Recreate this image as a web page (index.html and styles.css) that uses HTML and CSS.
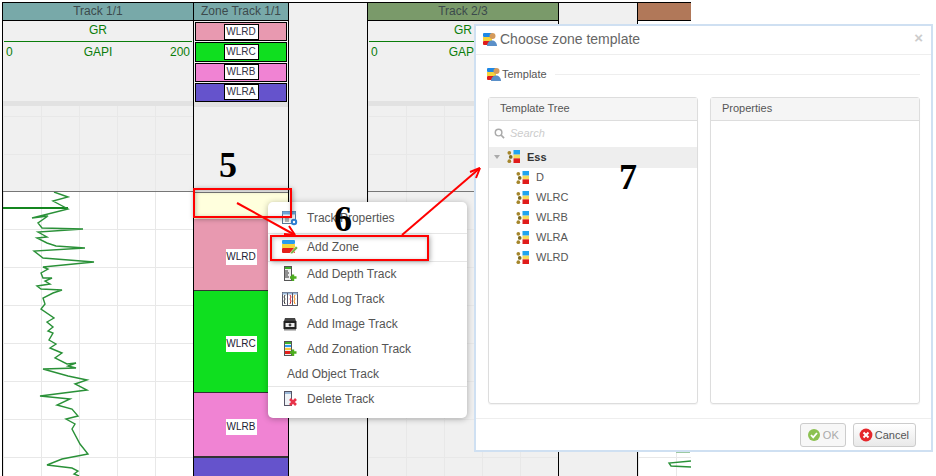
FILE: index.html
```html
<!DOCTYPE html>
<html lang="en">
<head>
  <meta charset="UTF-8" />
  <title>Choose zone template</title>
  <link rel="stylesheet" href="styles.css">
</head>
<body>
  <svg class="defs" width="0" height="0">
    <symbol id="icoPerson" viewBox="0 0 14 13">
      <rect x="0" y="0" width="9" height="4" rx="1" fill="#1e88e5"/>
      <rect x="0" y="4" width="9" height="4" fill="#f5d33b"/>
      <rect x="0" y="8" width="9" height="4" rx="1" fill="#e01b1b"/>
      <circle cx="9.5" cy="3" r="3" fill="#d49a5c"/>
      <path d="M4 13 C4 5.5 14 5.5 14 13 Z" fill="#5a8fc8"/>
    </symbol>
    <symbol id="icoTree" viewBox="0 0 14 14">
      <rect x="7" y="0" width="7" height="5" fill="#20a4ee"/>
      <rect x="7" y="5" width="7" height="4" fill="#f5dc5a"/>
      <rect x="7" y="9" width="7" height="5" fill="#e01b1b"/>
      <circle cx="2.5" cy="3" r="2" fill="#a5862b"/>
      <circle cx="4" cy="7.5" r="2" fill="#7d6a1e"/>
      <circle cx="2.5" cy="12" r="2" fill="#a5862b"/>
    </symbol>
  </svg>

  <!-- tracks -->
  <div class="tracks">
    <div class="track track-log">
      <div class="track-head head-teal">Track 1/1</div>
      <div class="legend">
        <div class="legend-name">GR</div>
        <div class="legend-scale"><span>0</span><span class="scale-unit">GAPI</span><span class="scale-max">200</span></div>
      </div>
      <div class="track-sep"></div>
      <div class="upper upper-grid"></div>
      <div class="lower lower-grid">
        <svg class="curve" viewBox="3 192 190 284" width="190" height="284">
          <path d="M3 208H68" stroke="#14861f" stroke-width="2" fill="none"/>
          <polyline fill="none" stroke="#2a9138" stroke-width="1.4" points="54,192 68,197 53,201 68,209 32,218 48,216 38,223 42,228 83,229 38,232 47,237 37,238 47,243 56,246 85,248 34,251 43,258 94,262 43,267 48,269 41,273 43,278 52,278 45,281 50,284 37,286 41,289 62,290 53,293 43,298 45,304 41,309 54,318 47,322 53,327 48,331 53,333 49,340 56,344 50,348 62,353 55,358 67,364 76,363 68,366 76,368 43,369 68,376 87,380 75,384 87,390 40,396 70,399 57,405 72,409 78,416 66,419 75,424 72,429 80,444 88,454 62,459 47,465 72,468 78,471 74,474 79,476"/>
        </svg>
      </div>
    </div>

    <div class="track track-zone">
      <div class="track-head head-teal">Zone Track 1/1</div>
      <div class="legend zone-legend">
        <div class="zone-key key-pink"><span>WLRD</span></div>
        <div class="zone-key key-green"><span>WLRC</span></div>
        <div class="zone-key key-pink2"><span>WLRB</span></div>
        <div class="zone-key key-purple"><span>WLRA</span></div>
      </div>
      <div class="track-sep"></div>
      <div class="upper"></div>
      <div class="lower zones">
        <div class="zone zone-new"></div>
        <div class="zone zone-d"><span>WLRD</span></div>
        <div class="zone zone-c"><span>WLRC</span></div>
        <div class="zone zone-b"><span>WLRB</span></div>
        <div class="zone zone-a"></div>
      </div>
    </div>

    <div class="track track-gap"></div>

    <div class="track track-log">
      <div class="track-head head-green">Track 2/3</div>
      <div class="legend">
        <div class="legend-name">GR</div>
        <div class="legend-scale"><span>0</span><span class="scale-unit">GAPI</span><span class="scale-max">200</span></div>
      </div>
      <div class="track-sep"></div>
      <div class="upper upper-grid"></div>
      <div class="lower lower-grid lower-grey"></div>
    </div>

    <div class="track track-gap"></div>

    <div class="track track-last">
      <div class="track-head head-brown"></div>
      <div class="legend legend-white"></div>
      <div class="track-sep"></div>
      <div class="upper upper-white"></div>
      <div class="lower lower-grid">
        <svg class="curve" viewBox="638 192 53 284" width="53" height="284">
          <path d="M676 452.5H690" stroke="#9cc9a2" stroke-width="1" fill="none"/>
          <polyline fill="none" stroke="#2a9138" stroke-width="1.4" points="691,461 669,463 671,466 691,467"/>
        </svg>
      </div>
    </div>
  </div>

  <!-- context menu -->
  <div class="menu">
    <div class="menu-item item-first">
      <svg class="menu-ico" viewBox="0 0 16 16"><rect x="0.5" y="1.5" width="13" height="12" fill="#fff" stroke="#5c7a99"/><rect x="0.5" y="1.5" width="13" height="3" fill="#6fa8dc"/><path d="M3 7h4M3 9h4M3 11h4" stroke="#777"/><circle cx="12" cy="12" r="3.2" fill="#2d7fd3"/><circle cx="12" cy="12" r="1.2" fill="#fff"/></svg>
      <span>Track Properties</span>
    </div>
    <div class="menu-item item-zone">
      <svg class="menu-ico" viewBox="0 0 16 16"><rect x="0" y="1" width="13" height="4" rx="1" fill="#2a9df0"/><rect x="0" y="5" width="13" height="4" fill="#f7d53c"/><rect x="0" y="9" width="13" height="5" rx="1" fill="#e3201b"/><path d="M8 14 L14 7 L16 9 L10 15 Z" fill="#7cb342" stroke="#fff" stroke-width="0.5"/></svg>
      <span>Add Zone</span>
    </div>
    <div class="menu-item">
      <svg class="menu-ico" viewBox="0 0 16 16"><rect x="2.5" y="0.5" width="7" height="14" fill="#eee" stroke="#555"/><rect x="3" y="1" width="6" height="2" fill="#3fae2a"/><path d="M3 5h3M3 7h4M3 9h3M3 11h4" stroke="#333"/><path d="M11 8.5v6.5M8 11.5h6.5" stroke="#4cae1e" stroke-width="2.4"/></svg>
      <span>Add Depth Track</span>
    </div>
    <div class="menu-item">
      <svg class="menu-ico" viewBox="0 0 16 16"><rect x="0.5" y="1.5" width="15" height="13" fill="#fff" stroke="#556"/><rect x="0.5" y="1.5" width="15" height="2" fill="#9ab8d8"/><path d="M5.5 2v12M10.5 2v12" stroke="#556"/><path d="M3 4l-1 2 1 2-1 2 1 3" stroke="#333" fill="none"/><path d="M8 4l1 2-1 2 1 2-1 3" stroke="#d3202a" fill="none"/><path d="M13 4l-1 2 1 2-1 2 1 3" stroke="#ef8a17" fill="none"/></svg>
      <span>Add Log Track</span>
    </div>
    <div class="menu-item">
      <svg class="menu-ico" viewBox="0 0 16 16"><path d="M3 2h10l1 3H2z" fill="#444"/><rect x="1.5" y="5" width="13" height="8" fill="#222"/><rect x="3.5" y="7" width="9" height="4" fill="#eee"/><circle cx="8" cy="9" r="1.4" fill="#444"/><rect x="2" y="13" width="12" height="1.5" fill="#888"/></svg>
      <span>Add Image Track</span>
    </div>
    <div class="menu-item">
      <svg class="menu-ico" viewBox="0 0 16 16"><rect x="2.5" y="0.5" width="7" height="14" fill="#eee" stroke="#555"/><rect x="3" y="1" width="6" height="2" fill="#3fae2a"/><rect x="3" y="4" width="6" height="2" fill="#2a9df0"/><rect x="3" y="7" width="6" height="2" fill="#f7c93c"/><rect x="3" y="10" width="6" height="3" fill="#e3201b"/><path d="M11 8.5v6.5M8 11.5h6.5" stroke="#4cae1e" stroke-width="2.4"/></svg>
      <span>Add Zonation Track</span>
    </div>
    <div class="menu-item item-noicon"><span>Add Object Track</span></div>
    <div class="menu-item item-delete">
      <svg class="menu-ico" viewBox="0 0 16 16"><rect x="2.5" y="0.5" width="7" height="14" fill="#eef2f6" stroke="#556"/><rect x="3" y="1" width="6" height="2" fill="#9ab8d8"/><path d="M8 8l6 6M14 8l-6 6" stroke="#e8344a" stroke-width="2.6"/></svg>
      <span>Delete Track</span>
    </div>
  </div>

  <!-- dialog -->
  <div class="dialog">
    <div class="dialog-head">
      <svg class="dialog-ico"><use href="#icoPerson"/></svg>
      <span class="dialog-title">Choose zone template</span>
      <span class="dialog-close">×</span>
    </div>
    <div class="dialog-body">
      <div class="section">
        <svg class="dialog-ico"><use href="#icoPerson"/></svg>
        <span>Template</span>
        <div class="section-line"></div>
      </div>
      <div class="panels">
        <div class="panel">
          <div class="panel-head">Template Tree</div>
          <div class="search">
            <svg class="search-ico" viewBox="0 0 12 12"><circle cx="5" cy="5" r="3.6" fill="none" stroke="#aaa" stroke-width="1.6"/><path d="M7.8 7.8L11 11" stroke="#aaa" stroke-width="1.8"/></svg>
            <span>Search</span>
          </div>
          <div class="tree-root">
            <span class="caret"></span>
            <svg class="tree-ico"><use href="#icoTree"/></svg>
            <span>Ess</span>
          </div>
          <div class="tree-row"><svg class="tree-ico"><use href="#icoTree"/></svg><span>D</span></div>
          <div class="tree-row"><svg class="tree-ico"><use href="#icoTree"/></svg><span>WLRC</span></div>
          <div class="tree-row"><svg class="tree-ico"><use href="#icoTree"/></svg><span>WLRB</span></div>
          <div class="tree-row"><svg class="tree-ico"><use href="#icoTree"/></svg><span>WLRA</span></div>
          <div class="tree-row"><svg class="tree-ico"><use href="#icoTree"/></svg><span>WLRD</span></div>
        </div>
        <div class="panel">
          <div class="panel-head">Properties</div>
        </div>
      </div>
    </div>
    <div class="dialog-foot">
      <button class="btn btn-off">
        <svg class="btn-ico" viewBox="0 0 14 14"><circle cx="7" cy="7" r="6" fill="#8cc152"/><path d="M4 7l2.2 2.4L10 5" stroke="#fff" stroke-width="1.8" fill="none"/></svg>
        OK
      </button>
      <button class="btn">
        <svg class="btn-ico" viewBox="0 0 14 14"><circle cx="7" cy="7" r="6.4" fill="#e5262b"/><path d="M4.5 4.5l5 5M9.5 4.5l-5 5" stroke="#fff" stroke-width="2"/></svg>
        Cancel
      </button>
    </div>
  </div>

  <!-- annotations -->
  <div class="red-box box-zone"></div>
  <div class="red-box box-menu"></div>
  <svg class="arrows" width="936" height="476">
    <path d="M237 203L295 235" stroke="#f00" stroke-width="2" fill="none"/>
    <path d="M295 235L284 234M295 235L289 226" stroke="#f00" stroke-width="2" fill="none"/>
    <path d="M402 235L480 168" stroke="#f00" stroke-width="2" fill="none"/>
    <path d="M480 168L470 172M480 168L476 178" stroke="#f00" stroke-width="2" fill="none"/>
  </svg>
  <span class="step step-5">5</span>
  <span class="step step-6">6</span>
  <span class="step step-7">7</span>
</body>
</html>
```

FILE: styles.css
```css
body {
  position: relative;
  width: 936px;
  height: 476px;
  margin: 0;
  overflow: hidden;
  background: #fff;
  font-family: "Liberation Sans", Arial, sans-serif;
  font-size: 12px;
  color: #555;
}

.defs {
  position: absolute;
}

/* tracks */
.tracks {
  display: flex;
  height: 474px;
  padding: 2px 0 0 2px;
}

.track {
  display: flex;
  flex-direction: column;
  border-left: 1px solid #000;
  border-top: 1px solid #000;
}

.track-log {
  width: 190px;
}

.track-zone {
  width: 94px;
}

.track-gap {
  width: 78px;
  background: #f0f0f0;
}

.track-last {
  width: 53px;
}

.track-head {
  flex: none;
  height: 17px;
  border-bottom: 1px solid #000;
  line-height: 17px;
  text-align: center;
  color: #3c4a4c;
}

.head-teal {
  background: #78a9a9;
}

.head-green {
  background: #7a9a6a;
}

.head-brown {
  background: #b17859;
}

.legend {
  flex: none;
  height: 80px;
  background: #f0f0f0;
  color: #0a7d0a;
}

.legend-white {
  background: #fff;
}

.legend-name {
  height: 20px;
  border-bottom: 1px solid #0a7d0a;
  margin: 0 1px;
  line-height: 18px;
  text-align: center;
}

.legend-scale {
  display: grid;
  grid-template-columns: 1fr auto 1fr;
  padding: 3px 3px 0 3px;
}

.scale-max {
  text-align: right;
}

.track-sep {
  flex: none;
  height: 5px;
  background: #e2e2e2;
}

.upper {
  flex: none;
  height: 85px;
  border-bottom: 1px solid #777;
  background-color: #f0f0f0;
}

.upper-white {
  background-color: #fff;
}

.upper-grid,
.lower-grid {
  background-image:
    linear-gradient(#e8e8e8 1px, transparent 1px),
    linear-gradient(90deg, #e8e8e8 1px, transparent 1px);
  background-size: 38px 38px;
}

.upper-grid {
  background-position: 0 10px, 38px 0;
}

.lower {
  flex: 1;
  overflow: hidden;
}

.lower-grid {
  background-position: 0 37px, 38px 0;
}

.lower-grey {
  background-color: #f0f0f0;
}

.curve {
  display: block;
}

/* zone track */
.zone-legend {
  display: flex;
  flex-direction: column;
  gap: 1px;
  padding: 1px 1px 0 1px;
}

.zone-key {
  display: flex;
  align-items: center;
  justify-content: center;
  height: 18px;
  border: 1px solid #000;
}

.zone-key span {
  width: 33px;
  height: 14px;
  border: 1px solid #000;
  background: #fff;
  font-size: 10px;
  line-height: 14px;
  text-align: center;
  color: #334;
}

.key-pink,
.zone-d {
  background: #e899b0;
}

.key-green,
.zone-c {
  background: #0fdf1f;
}

.key-pink2,
.zone-b {
  background: #f083d3;
}

.key-purple,
.zone-a {
  background: #6553cc;
}

.zones {
  display: flex;
  flex-direction: column;
}

.zone {
  display: flex;
  flex: none;
  align-items: center;
  justify-content: center;
  padding-top: 4px;
  box-sizing: border-box;
  border-bottom: 1px solid #333;
}

.zone span {
  width: 31px;
  height: 16px;
  background: #fff;
  font-size: 10px;
  line-height: 16px;
  text-align: center;
  color: #223;
}

.zone-new {
  height: 26px;
  border-bottom: none;
  background: #ffffdd;
}

.zone-d {
  height: 72px;
}

.zone-c {
  height: 102px;
}

.zone-b {
  height: 65px;
  border-bottom-width: 2px;
}

.zone-a {
  flex: 1;
  border-bottom: none;
}

/* context menu */
.menu {
  position: absolute;
  left: 268px;
  top: 202px;
  box-sizing: border-box;
  width: 199px;
  height: 216px;
  border-radius: 5px;
  background: #fff;
  box-shadow: 0 1px 6px rgba(0, 0, 0, 0.3);
}

.menu-item {
  display: flex;
  align-items: center;
  gap: 9px;
  box-sizing: border-box;
  height: 25px;
  padding: 0 0 2px 14px;
}

.menu-ico {
  flex: none;
  width: 16px;
  height: 16px;
}

.item-first {
  height: 32px;
  padding-bottom: 0;
  border-bottom: 1px solid #e6e6e6;
}

.item-zone {
  height: 28px;
  border-bottom: 1px solid #e6e6e6;
}

.item-noicon {
  height: 25px;
  padding: 0 0 0 19px;
  border-bottom: 1px solid #e6e6e6;
}

/* dialog */
.dialog {
  position: absolute;
  left: 474px;
  top: 24px;
  display: flex;
  flex-direction: column;
  box-sizing: border-box;
  width: 459px;
  height: 428px;
  border: 2px solid #cfe0f2;
  background: #fff;
}

.dialog-head {
  display: flex;
  flex: none;
  align-items: center;
  gap: 3px;
  height: 26px;
  padding: 0 0 2px 7px;
  border-bottom: 1px solid #eee;
}

.dialog-ico {
  flex: none;
  width: 14px;
  height: 13px;
}

.dialog-title {
  font-size: 14px;
  color: #666;
}

.dialog-close {
  margin: 0 8px 4px auto;
  font-size: 15px;
  font-weight: bold;
  color: #ccc;
}

.dialog-body {
  display: flex;
  flex: 1;
  flex-direction: column;
  min-height: 0;
  padding: 9px 11px 14px 12px;
}

.section {
  display: flex;
  flex: none;
  align-items: center;
  gap: 1px;
  height: 20px;
  margin: 0 0 13px -1px;
  font-size: 11px;
}

.section-line {
  flex: 1;
  height: 1px;
  margin-left: 7px;
  background: #eee;
}

.panels {
  display: flex;
  flex: 1;
  gap: 12px;
  min-height: 0;
}

.panel {
  flex: 1;
  border: 1px solid #ddd;
  border-radius: 3px;
  box-shadow: 0 1px 1px rgba(0, 0, 0, 0.05);
}

.panel-head {
  height: 22px;
  padding-left: 11px;
  border-bottom: 1px solid #ddd;
  background: #f5f5f5;
  font-size: 11px;
  line-height: 20px;
}

.search {
  display: flex;
  align-items: center;
  gap: 5px;
  box-sizing: border-box;
  height: 26px;
  padding: 0 0 2px 5px;
  font-size: 11px;
  font-style: italic;
  color: #ccc;
}

.search-ico {
  width: 11px;
  height: 11px;
}

.tree-root {
  display: flex;
  align-items: center;
  gap: 7px;
  box-sizing: border-box;
  height: 21px;
  padding: 0 0 2px 5px;
  background: #eee;
  font-size: 11px;
  font-weight: bold;
  color: #333;
}

.caret {
  width: 0;
  height: 0;
  border-top: 4px solid #aaa;
  border-right: 3px solid transparent;
  border-left: 3px solid transparent;
}

.tree-ico {
  flex: none;
  width: 13px;
  height: 13px;
}

.tree-row {
  display: flex;
  align-items: center;
  gap: 7px;
  box-sizing: border-box;
  height: 20px;
  padding: 0 0 2px 27px;
  font-size: 11px;
}

.dialog-foot {
  display: flex;
  flex: none;
  justify-content: flex-end;
  gap: 7px;
  height: 27px;
  padding: 4px 15px 0 0;
  border-top: 1px solid #eee;
}

.btn {
  display: flex;
  align-items: center;
  gap: 2px;
  height: 24px;
  padding: 0 6px 0 5px;
  border: 1px solid #ccc;
  border-radius: 3px;
  background: linear-gradient(#fff, #e9e9e9);
  font-family: inherit;
  font-size: 11px;
  color: #555;
}

.btn-off {
  padding-left: 6px;
  background: #f7f7f7;
  color: #aaa;
}

.btn-ico {
  width: 14px;
  height: 14px;
}

/* annotations */
.red-box {
  position: absolute;
  box-sizing: border-box;
  border: 2px solid #f00;
  box-shadow: 1px 1px 5px rgba(0, 0, 0, 0.35), inset 1px 1px 4px rgba(0, 0, 0, 0.25);
}

.box-zone {
  left: 193px;
  top: 188px;
  width: 99px;
  height: 30px;
}

.box-menu {
  left: 270px;
  top: 235px;
  width: 159px;
  height: 26px;
}

.arrows {
  position: absolute;
  left: 0;
  top: 0;
}

.step {
  position: absolute;
  font-family: "Liberation Serif", serif;
  font-size: 36px;
  font-weight: bold;
  line-height: 36px;
  color: #000;
}

.step-5 {
  left: 219px;
  top: 147px;
}

.step-6 {
  left: 334px;
  top: 201px;
}

.step-7 {
  left: 619px;
  top: 159px;
}
```
